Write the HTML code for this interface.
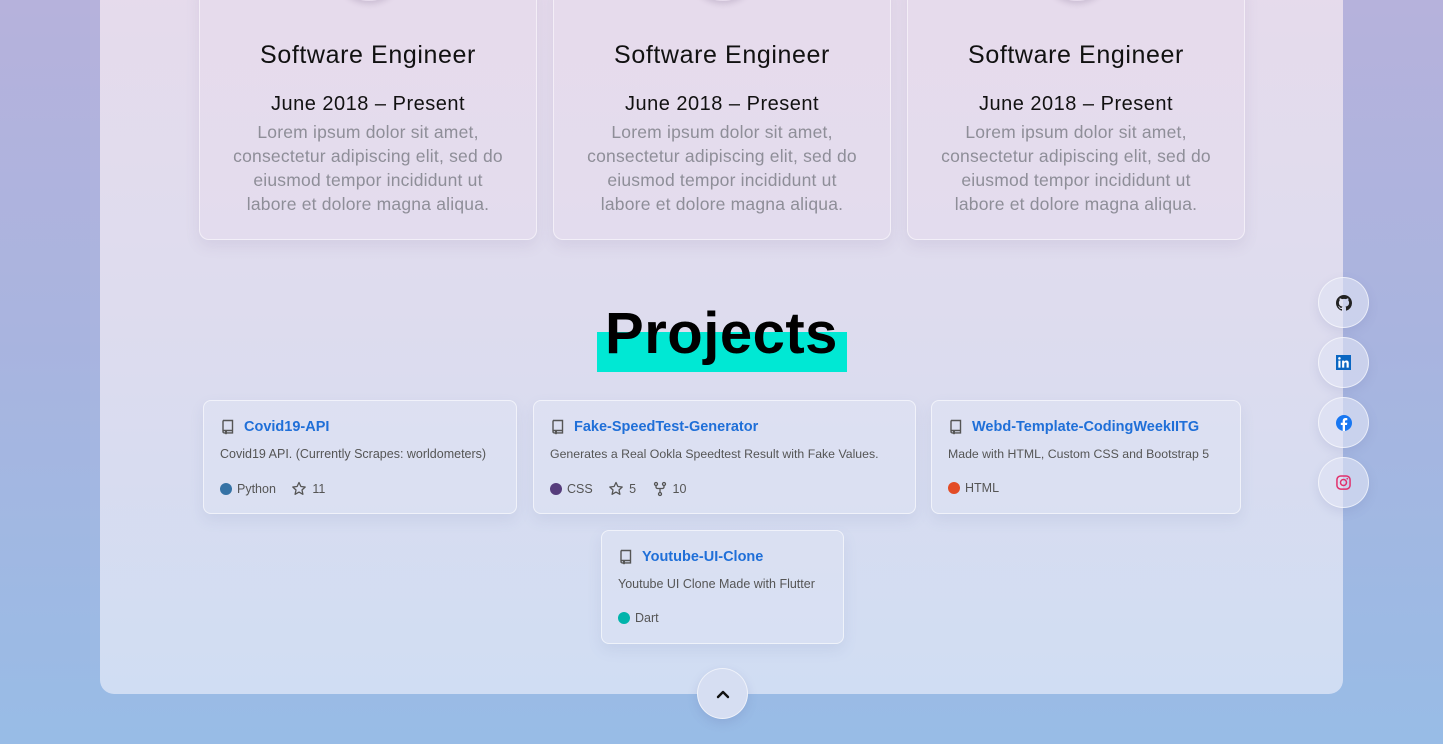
<!DOCTYPE html>
<html><head><meta charset="utf-8"><style>
*{margin:0;padding:0;box-sizing:border-box}
body{width:1443px;height:744px;overflow:hidden;position:relative;font-family:"Liberation Sans",sans-serif;background:linear-gradient(180deg,#b6b2dc 0%,#a9b4df 45%,#98bce6 100%)}
.panel{position:absolute;left:100px;top:-20px;width:1243px;height:714px;border-radius:0 0 14px 14px;background:linear-gradient(180deg,#e6dbec 0%,#dedcee 45%,#d0ddf3 100%)}
.exp{position:absolute;top:-20px;width:338px;height:260px;border:1px solid rgba(255,255,255,.55);border-radius:10px;background:rgba(232,220,238,.4);box-shadow:0 6px 14px rgba(120,110,160,.12);text-align:center;overflow:hidden}
.exp h3{position:absolute;top:60px;width:100%;font-weight:normal;font-size:25px;color:#111;letter-spacing:.6px}
.exp h4{position:absolute;top:112px;width:100%;font-weight:normal;font-size:20px;color:#111;letter-spacing:.5px}
.exp p{position:absolute;top:139px;width:100%;font-size:17.5px;line-height:24px;color:#8e8e98;letter-spacing:.2px}
.avatar{position:absolute;left:134px;top:-50px;width:70px;height:70px;border-radius:50%;box-shadow:0 3px 6px rgba(100,80,120,.2)}
.title{position:absolute;left:0;width:1443px;top:300px;text-align:center;font-weight:bold;font-size:58px;color:#000;z-index:2;letter-spacing:.5px}
.hl{position:absolute;left:597px;top:332px;width:250px;height:40px;background:#00e8d4}
.card{position:absolute;border:1px solid rgba(255,255,255,.6);border-radius:8px;background:rgba(225,228,245,.45);box-shadow:0 6px 14px rgba(110,120,170,.12)}
.card .t{position:absolute;left:16px;top:18px;font-weight:bold;font-size:14.5px;color:#1f6fd8;display:flex;align-items:center;gap:8px}
.card .d{position:absolute;left:16px;top:46px;font-size:12.5px;color:#555;white-space:nowrap}
.card .m{position:absolute;left:16px;top:80px;font-size:12.5px;color:#555;display:flex;align-items:center;gap:5px}
.dot{width:12px;height:12px;border-radius:50%;display:inline-block}
.soc{position:absolute;left:1318px;width:51px;height:51px;border-radius:50%;border:1px solid rgba(255,255,255,.6);background:rgba(225,228,245,.6);box-shadow:0 4px 10px rgba(100,110,170,.15);display:flex;align-items:center;justify-content:center}
.up{position:absolute;left:697px;top:668px;width:51px;height:51px;border-radius:50%;border:1px solid rgba(255,255,255,.6);background:#d6def2;box-shadow:0 4px 10px rgba(100,110,170,.2);display:flex;align-items:center;justify-content:center}
</style></head><body>
<div class="panel"></div>
<div class="exp" style="left:199px"><div class="avatar"></div><h3>Software Engineer</h3><h4>June 2018 – Present</h4><p>Lorem ipsum dolor sit amet,<br>consectetur adipiscing elit, sed do<br>eiusmod tempor incididunt ut<br>labore et dolore magna aliqua.</p></div>
<div class="exp" style="left:553px"><div class="avatar"></div><h3>Software Engineer</h3><h4>June 2018 – Present</h4><p>Lorem ipsum dolor sit amet,<br>consectetur adipiscing elit, sed do<br>eiusmod tempor incididunt ut<br>labore et dolore magna aliqua.</p></div>
<div class="exp" style="left:907px"><div class="avatar"></div><h3>Software Engineer</h3><h4>June 2018 – Present</h4><p>Lorem ipsum dolor sit amet,<br>consectetur adipiscing elit, sed do<br>eiusmod tempor incididunt ut<br>labore et dolore magna aliqua.</p></div>

<div class="hl"></div>
<div class="title">Projects</div>

<svg width="0" height="0" style="position:absolute"><defs><symbol id="repo" viewBox="0 0 16 16"><path d="M3 1.5h9.5v10H4.2a1.2 1.2 0 0 0-1.2 1.2V2.5a1 1 0 0 1 1-1z M3 12.7a1.2 1.2 0 0 0 1.2 1.2H5 M7 13.9h5.5v-2.4" fill="none" stroke="#555" stroke-width="1.4"/><path d="M5 12v3.5l1-.8 1 .8V12z" fill="#555"/></symbol>
<symbol id="star" viewBox="0 0 16 16"><path d="M8 1.5l1.9 4 4.3.5-3.2 3 .9 4.3L8 11.1 4.1 13.3 5 9 1.8 6l4.3-.5z" fill="none" stroke="#555" stroke-width="1.3" stroke-linejoin="round"/></symbol>
<symbol id="fork" viewBox="0 0 16 16"><g fill="none" stroke="#555" stroke-width="1.3"><circle cx="4" cy="3" r="1.5"/><circle cx="12" cy="3" r="1.5"/><circle cx="8" cy="13" r="1.5"/><path d="M4 4.5v1.5a1.5 1.5 0 0 0 1.5 1.5h5A1.5 1.5 0 0 0 12 6V4.5M8 7.5v4"/></g></symbol></defs></svg>

<div class="card" style="left:203px;top:400px;width:314px;height:114px"><div class="t"><svg width="16" height="16"><use href="#repo"/></svg>Covid19-API</div><div class="d">Covid19 API. (Currently Scrapes: worldometers)</div><div class="m"><span class="dot" style="background:#3572a5"></span>Python&nbsp;&nbsp;&nbsp;<svg width="16" height="16"><use href="#star"/></svg>11</div></div>
<div class="card" style="left:533px;top:400px;width:383px;height:114px"><div class="t"><svg width="16" height="16"><use href="#repo"/></svg>Fake-SpeedTest-Generator</div><div class="d" style="font-size:12.3px">Generates a Real Ookla Speedtest Result with Fake Values.</div><div class="m"><span class="dot" style="background:#563d7c"></span>CSS&nbsp;&nbsp;&nbsp;<svg width="16" height="16"><use href="#star"/></svg>5&nbsp;&nbsp;&nbsp;<svg width="16" height="16"><use href="#fork"/></svg>10</div></div>
<div class="card" style="left:931px;top:400px;width:310px;height:114px"><div class="t"><svg width="16" height="16"><use href="#repo"/></svg>Webd-Template-CodingWeekIITG</div><div class="d" style="font-size:12.3px">Made with HTML, Custom CSS and Bootstrap 5</div><div class="m"><span class="dot" style="background:#e34c26"></span>HTML</div></div>
<div class="card" style="left:601px;top:530px;width:243px;height:114px"><div class="t"><svg width="16" height="16"><use href="#repo"/></svg>Youtube-UI-Clone</div><div class="d" style="font-size:12.5px">Youtube UI Clone Made with Flutter</div><div class="m"><span class="dot" style="background:#00b4ab"></span>Dart</div></div>

<div class="soc" style="top:277px"><svg width="16" height="16" viewBox="0 0 16 16"><path fill="#222" d="M8 0C3.58 0 0 3.58 0 8c0 3.54 2.29 6.53 5.47 7.59.4.07.55-.17.55-.38v-1.34c-2.23.48-2.7-1.07-2.7-1.07-.36-.92-.89-1.17-.89-1.17-.73-.5.05-.49.05-.49.8.06 1.23.83 1.23.83.71 1.22 1.87.87 2.33.66.07-.52.28-.87.51-1.07-1.78-.2-3.65-.89-3.65-3.95 0-.87.31-1.59.82-2.15-.08-.2-.36-1.02.08-2.12 0 0 .67-.21 2.2.82a7.6 7.6 0 0 1 4 0c1.53-1.04 2.2-.82 2.2-.82.44 1.1.16 1.92.08 2.12.51.56.82 1.27.82 2.15 0 3.07-1.87 3.75-3.65 3.95.29.25.54.73.54 1.48v2.2c0 .21.15.46.55.38A8 8 0 0 0 16 8c0-4.42-3.58-8-8-8z"/></svg></div>
<div class="soc" style="top:337px"><svg width="15" height="15" viewBox="0 0 16 16"><rect width="16" height="16" fill="#0a66c2"/><rect x="2.5" y="6" width="2.3" height="7.5" fill="#fff"/><circle cx="3.65" cy="3.6" r="1.35" fill="#fff"/><path d="M6.5 6h2.2v1.1c.4-.7 1.2-1.3 2.4-1.3 2 0 2.5 1.3 2.5 3v4.7h-2.3V9.4c0-.9-.2-1.6-1.1-1.6-1 0-1.4.7-1.4 1.7v4H6.5z" fill="#fff"/></svg></div>
<div class="soc" style="top:397px"><svg width="16" height="16" viewBox="0 0 16 16"><circle cx="8" cy="8" r="8" fill="#1877f2"/><path d="M9 16V10h2l.3-2.3H9V6.3c0-.6.2-1.1 1.1-1.1h1.2V3.1c-.2 0-.9-.1-1.7-.1-1.7 0-2.9 1-2.9 3v1.7H4.8V10h1.9v6z" fill="#fff"/></svg></div>
<div class="soc" style="top:457px"><svg width="15" height="15" viewBox="0 0 16 16"><rect x="1" y="1" width="14" height="14" rx="4" fill="none" stroke="#e1306c" stroke-width="1.6"/><circle cx="8" cy="8" r="3.2" fill="none" stroke="#e1306c" stroke-width="1.6"/><circle cx="12" cy="4" r=".9" fill="#e1306c"/></svg></div>

<div class="up"><svg width="16" height="12" viewBox="0 0 16 12"><path d="M3 9l5-5 5 5" fill="none" stroke="#111" stroke-width="2.4" stroke-linecap="round" stroke-linejoin="round"/></svg></div>
</body></html>
